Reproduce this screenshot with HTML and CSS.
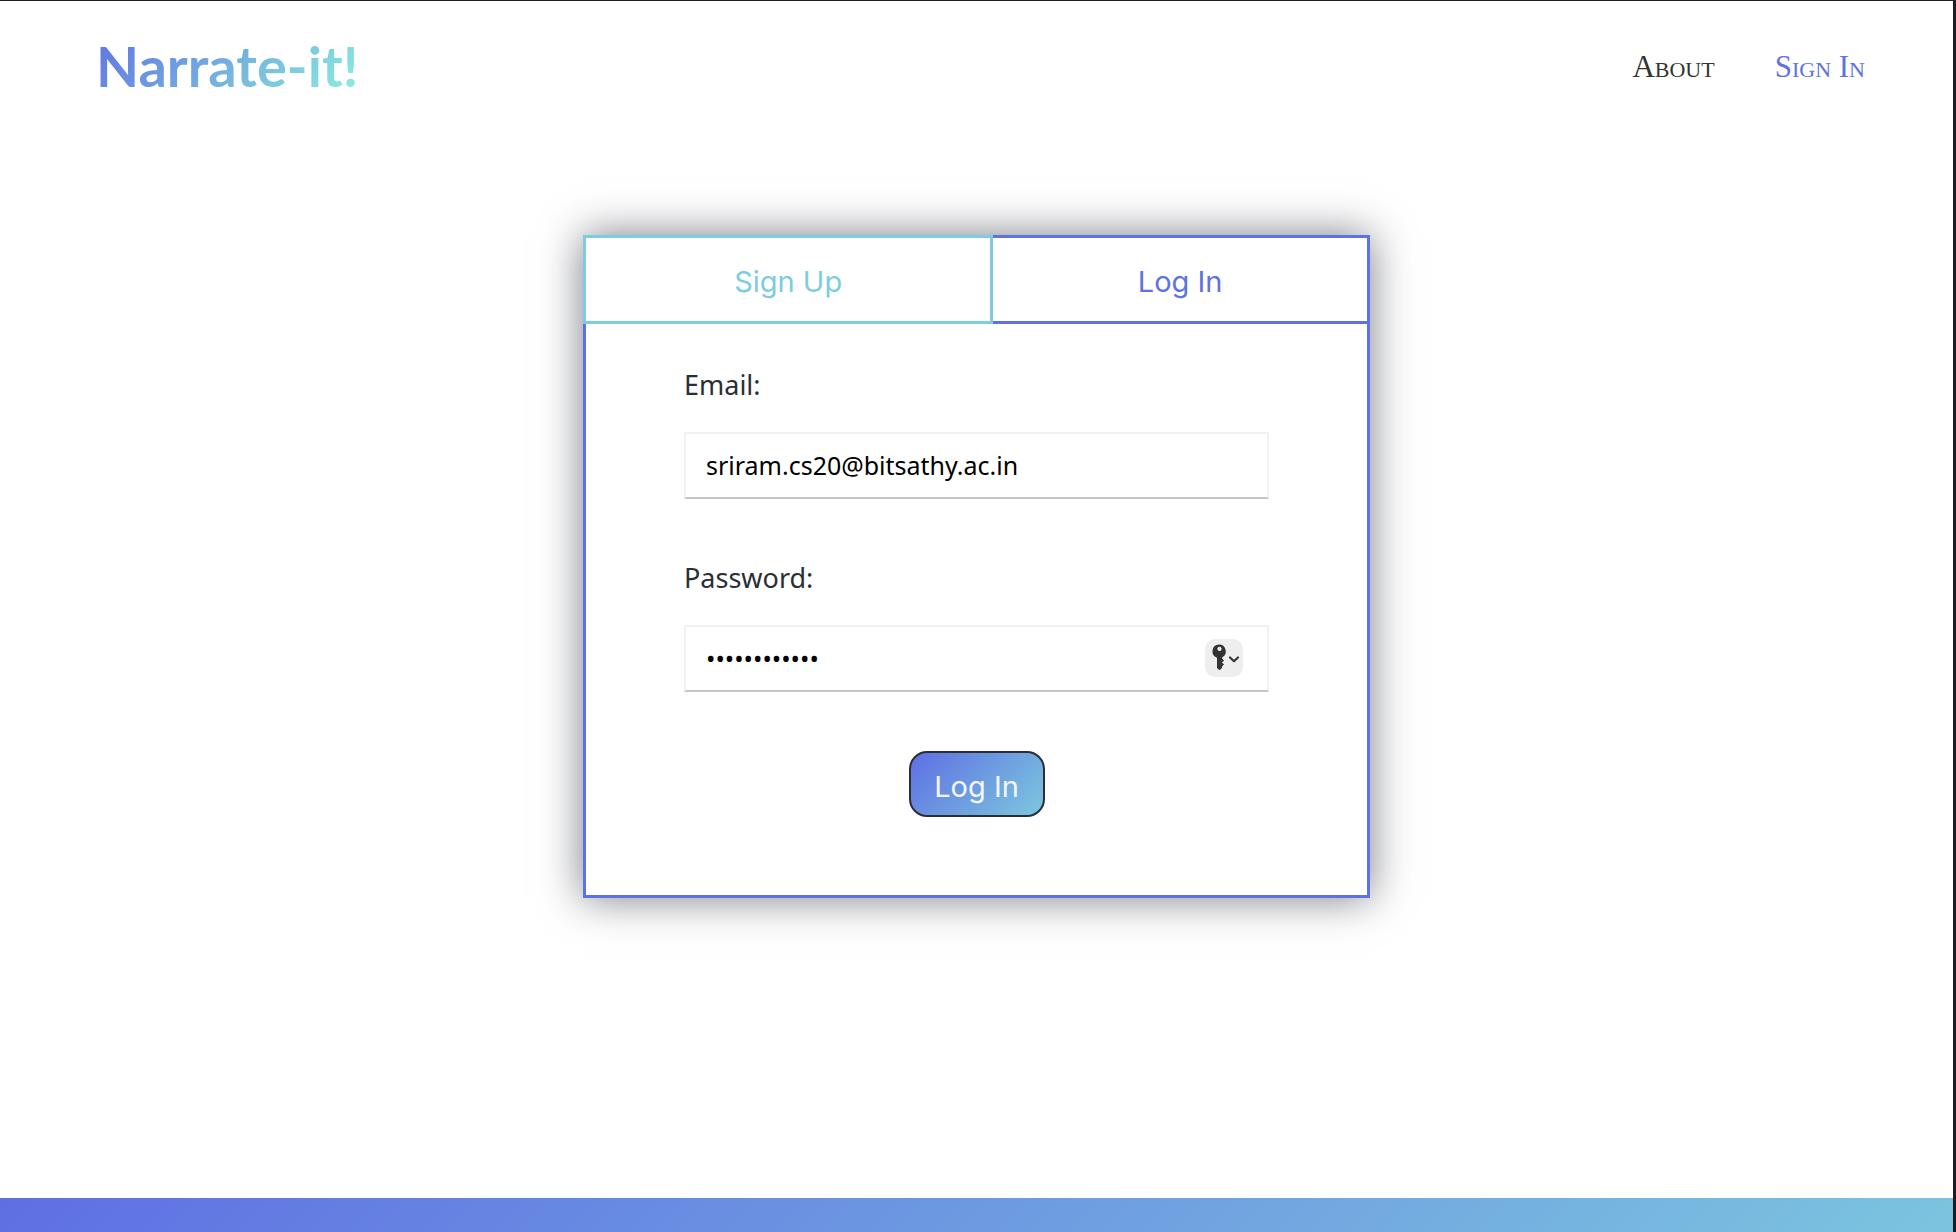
FILE: index.html
```html
<!DOCTYPE html>
<html lang="en">
<head>
<meta charset="utf-8">
<meta name="viewport" content="width=device-width, initial-scale=1">
<title>Narrate-it!</title>
<link rel="stylesheet" href="styles.css">
</head>
<body>
<header class="site-header">
  <a class="logo" href="#">Narrate-it!</a>
  <nav class="nav">
    <a class="nav-link" href="#">About</a>
    <a class="nav-link nav-link-active" href="#">Sign In</a>
  </nav>
</header>
<main class="main">
  <section class="card">
    <div class="tabs">
      <button class="tab tab-signup" type="button">Sign Up</button>
      <button class="tab tab-login" type="button">Log In</button>
    </div>
    <form class="form">
      <label class="label" for="email">Email:</label>
      <div class="field">
        <input class="input" id="email" type="email" value="sriram.cs20@bitsathy.ac.in">
      </div>
      <label class="label" for="password">Password:</label>
      <div class="field">
        <input class="input input-password" id="password" type="password" value="narrateit123">
        <button class="key-button" type="button" aria-label="Saved passwords">
          <svg width="38" height="38" viewBox="0 0 38 38" aria-hidden="true">
            <path fill="#333" fill-rule="evenodd" d="M14 5.500a6.800 6.800 0 0 1 3.200 12.800V19.500L19 21.500L17 23.500L19 25.500L17 27.500V29L14.500 31.200L12 29V18.700A6.800 6.800 0 0 1 14 5.500ZM14.500 7.800a2.100 2.100 0 1 0 .01 0Z"/>
            <path fill="none" stroke="#333" stroke-width="2.200" stroke-linecap="round" stroke-linejoin="round" d="M25 18.500l4 3.800 4-3.800"/>
          </svg>
        </button>
      </div>
      <button class="submit" type="submit">Log In</button>
    </form>
  </section>
</main>
<footer class="site-footer"></footer>
</body>
</html>
```
FILE: styles.css
```css
* {
  box-sizing: border-box;
}

body {
  margin: 0;
  min-height: 100vh;
  display: flex;
  flex-direction: column;
  border-top: 1px solid #1f1d28;
  border-right: 3px solid #1b1d20;
  background: #fff;
  color: #2b2f35;
  font-family: "Noto Sans", sans-serif;
}

button,
input {
  margin: 0;
  font: inherit;
}

.site-header {
  display: flex;
  align-items: center;
  justify-content: space-between;
  height: 130px;
  padding: 0 88px 0 96px;
}

.logo {
  background: linear-gradient(135deg, #5f6fe3, #7bc4df 65%, #8ff5dc);
  background-clip: text;
  -webkit-background-clip: text;
  color: transparent;
  font-family: Lato, sans-serif;
  font-size: 56px;
  font-weight: 700;
  line-height: 80px;
  text-decoration: none;
}

.nav {
  display: flex;
  gap: 60px;
  padding-top: 2px;
}

.nav-link {
  color: #333;
  font-family: "Liberation Serif", serif;
  font-size: 31px;
  font-variant: small-caps;
  line-height: 40px;
  text-decoration: none;
}

.nav-link-active {
  color: #5f72e4;
}

.main {
  flex: 1;
  padding: 104px 24px 60px;
}

.card {
  max-width: 787px;
  margin: 0 auto;
  border: 3px solid #5f72e4;
  border-top: 0;
  background: #fff;
  box-shadow: 0 0 40px rgba(33, 37, 48, 0.6);
}

.tabs {
  display: flex;
  margin: 0 -3px;
}

.tab {
  height: 89px;
  padding: 4px 0 0;
  border: 3px solid;
  background: #fff;
  font-family: Inter, sans-serif;
  font-size: 29px;
  cursor: pointer;
}

.tab-signup {
  flex: 409;
  border-color: #7ecce0;
  color: #7ecce0;
}

.tab-login {
  flex: 378;
  border-color: #5f72e4;
  border-left: 0;
  color: #5f72e4;
}

.form {
  display: flex;
  flex-direction: column;
  padding: 41px 98px 78px;
}

.label {
  margin-bottom: 27px;
  font-size: 27px;
  line-height: 40px;
}

.field {
  position: relative;
  margin-bottom: 59px;
}

.input {
  display: block;
  width: 100%;
  height: 67px;
  padding: 0 20px 2px;
  border: 2px solid #f1f1f1;
  border-bottom-color: #c6c6c6;
  background: #fff;
  color: #000;
  font-size: 25px;
  outline: none;
}

.input-password {
  padding-right: 72px;
}

.key-button {
  position: absolute;
  top: 14px;
  right: 26px;
  width: 38px;
  height: 38px;
  padding: 0;
  border: 0;
  border-radius: 10px;
  background: #eee;
  cursor: pointer;
}

.key-button svg {
  display: block;
}

.submit {
  align-self: center;
  width: 136px;
  height: 66px;
  padding: 4px 0 0;
  border: 2px solid #2b2f35;
  border-radius: 18px;
  background: linear-gradient(135deg, #5f6fe3, #7bc8de);
  color: #f3f6fc;
  font-family: Inter, sans-serif;
  font-size: 29px;
  cursor: pointer;
}

.site-footer {
  height: 34px;
  background: linear-gradient(135deg, #5f6fe3, #7bc4df);
}
```
